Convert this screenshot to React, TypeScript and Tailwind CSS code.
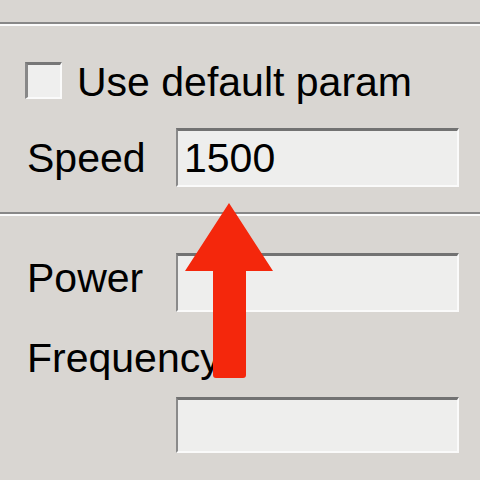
const font = { fontFamily: '"Liberation Sans", Arial, sans-serif' };

function Separator() {
  return <div className="h-[4px] border-t-2 border-b-2 border-t-[#888] border-b-[#fbfbfb]" />;
}

function Field({ value, height }: { value?: string; height: string }) {
  return (
    <div
      className={`w-[283px] ${height} border-t-[3px] border-l-2 border-b-2 border-r-2 border-t-[#727272] border-l-[#8a8a8a] border-b-[#fafafa] border-r-[#fafafa] bg-[#eeeeed] pl-[6px] pt-[7px] text-[41px] leading-[41px] text-black`}
    >
      {value}
    </div>
  );
}

export default function App() {
  return (
    <div className="relative h-[480px] w-[480px] overflow-hidden bg-[#d9d6d2] text-black" style={font}>
      <div className="h-[22px]" />
      <Separator />

      <div className="mt-[36px] flex items-start">
        <div className="ml-[25px] h-[37px] w-[37px] border-t-[3px] border-l-[3px] border-b-2 border-r-2 border-t-[#777] border-l-[#888] border-b-[#fafafa] border-r-[#fafafa] bg-[#efefee]" />
        <span className="ml-[15px] text-[41px] leading-[41px]">Use default param</span>
      </div>

      <div className="mt-[25px] flex items-start">
        <span className="ml-[27px] mt-[10px] w-[149px] text-[41px] leading-[41px]">Speed</span>
        <Field value="1500" height="h-[59px]" />
      </div>

      <div className="mt-[25px]">
        <Separator />
      </div>

      <div className="mt-[37px] flex items-start">
        <span className="ml-[27px] mt-[5px] w-[149px] text-[41px] leading-[41px]">Power</span>
        <Field height="h-[59px]" />
      </div>

      <div className="ml-[27px] mt-[26px] text-[41px] leading-[41px]">Frequency</div>

      <div className="ml-[176px] mt-[18px]">
        <Field height="h-[56px]" />
      </div>

      <svg className="absolute left-0 top-0" width="480" height="480" viewBox="0 0 480 480">
        <path
          d="M229 203 L273 271 L246 271 L246 375 Q246 378 243 378 L216 378 Q213 378 213 375 L213 271 L185 271 Z"
          fill="#f4270c"
        />
      </svg>
    </div>
  );
}
